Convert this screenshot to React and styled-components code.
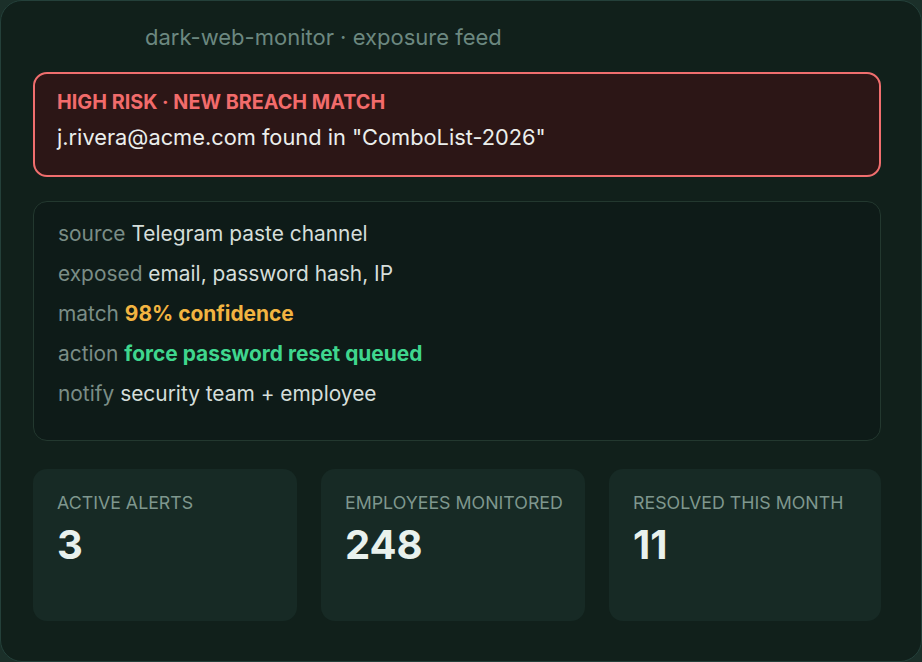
import React from "react";
import styled, { createGlobalStyle } from "styled-components";

const Global = createGlobalStyle`
  html, body {
    margin: 0;
    padding: 0;
    background: #1b2f29;
  }
  body {
    font-family: Inter, "Noto Sans", sans-serif;
    -webkit-font-smoothing: antialiased;
  }
`;

const Panel = styled.div`
  box-sizing: border-box;
  width: 922px;
  height: 662px;
  background: #11201b;
  border: 1px solid #24403a;
  border-radius: 22px;
  padding: 0 40px 0 32px;
  display: flex;
  flex-direction: column;
`;

const Title = styled.div`
  padding: 22px 0 0 112px;
  font-size: 22px;
  line-height: 28px;
  color: #6c8880;
  margin-bottom: 21px;
`;

const Alert = styled.div`
  border: 2px solid #f06e6e;
  background: #2c1616;
  border-radius: 14px;
  padding: 16px 22px 24px;
`;

const AlertHead = styled.div`
  font-size: 19.8px;
  line-height: 24px;
  font-weight: 700;
  color: #f26b6b;
`;

const AlertBody = styled.div`
  margin-top: 9px;
  font-size: 21.8px;
  line-height: 28px;
  color: #ebeeec;
`;

const Details = styled.div`
  margin-top: 24px;
  border: 1px solid #23382f;
  background: #0e1b18;
  border-radius: 14px;
  padding: 12px 24px 26px;
`;

const Row = styled.div`
  font-size: 20.9px;
  line-height: 40px;
  color: #d5deda;
`;

const Key = styled.span`
  color: #7a8d86;
`;

const Value = styled.span`
  font-weight: ${p => (p.$tone ? 700 : 400)};
  color: ${p =>
    p.$tone === "warn" ? "#f2b441" : p.$tone === "ok" ? "#3fd68e" : "#d5deda"};
`;

const Stats = styled.div`
  margin-top: 28px;
  display: grid;
  grid-template-columns: 264px 264px 1fr;
  gap: 24px;
`;

const Stat = styled.div`
  height: 152px;
  box-sizing: border-box;
  background: #172a25;
  border-radius: 14px;
  padding: 23px 24px 0;
`;

const StatLabel = styled.div`
  font-size: 17.8px;
  line-height: 22px;
  color: #7f978e;
  text-transform: uppercase;
  white-space: nowrap;
`;

const StatValue = styled.div`
  margin-top: 7px;
  font-size: 40px;
  line-height: 48px;
  font-weight: 700;
  color: #e9f1ed;
`;

const rows = [
  ["source", "Telegram paste channel"],
  ["exposed", "email, password hash, IP"],
  ["match", "98% confidence", "warn"],
  ["action", "force password reset queued", "ok"],
  ["notify", "security team + employee"],
];

const stats = [
  ["Active alerts", "3"],
  ["Employees monitored", "248"],
  ["Resolved this month", "11"],
];

export default function App() {
  return (
    <>
      <Global />
      <Panel>
        <Title>dark-web-monitor · exposure feed</Title>
        <Alert>
          <AlertHead>HIGH RISK · NEW BREACH MATCH</AlertHead>
          <AlertBody>j.rivera@acme.com found in "ComboList-2026"</AlertBody>
        </Alert>
        <Details>
          {rows.map(([k, v, tone]) => (
            <Row key={k}>
              <Key>{k}</Key> <Value $tone={tone}>{v}</Value>
            </Row>
          ))}
        </Details>
        <Stats>
          {stats.map(([label, value]) => (
            <Stat key={label}>
              <StatLabel>{label}</StatLabel>
              <StatValue>{value}</StatValue>
            </Stat>
          ))}
        </Stats>
      </Panel>
    </>
  );
}
